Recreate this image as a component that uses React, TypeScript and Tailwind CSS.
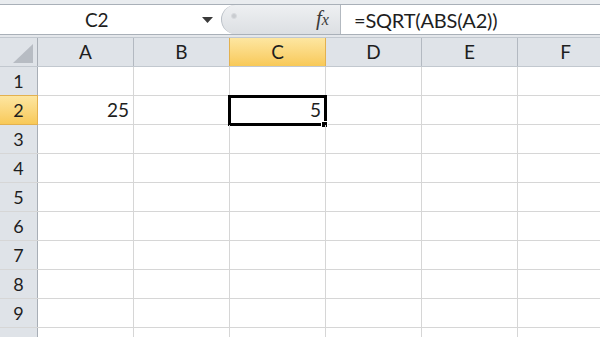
import React from "react";

const cols = ["A", "B", "C", "D", "E", "F"];
const rows = [1, 2, 3, 4, 5, 6, 7, 8, 9, 10];

export default function App() {
  return (
    <div
      className="w-[600px] h-[337px] overflow-hidden bg-white text-[#1e1e1e]"
      style={{ fontFamily: "Lato, 'Open Sans', sans-serif" }}
    >
      <div className="h-[4px] bg-[#e9ecef]" />
      {/* formula bar */}
      <div className="h-[31px] flex border-y border-[#a9b0b8] bg-white">
        <div className="w-[221px] shrink-0 relative">
          <span className="absolute left-[85px] top-[3px] text-[19px] leading-[24px] tracking-[-0.3px]">C2</span>
          <svg className="absolute left-[202px] top-[12px]" width="11" height="6" viewBox="0 0 11 6">
            <path d="M0 0 H11 L5.5 6 Z" fill="#3a3a3a" />
          </svg>
        </div>
        <div className="w-[120px] shrink-0 relative rounded-l-[15px] border-l border-[#b9bfc6] border-r border-r-[#b3b9c0] bg-gradient-to-b from-[#eef0f2] to-[#dcdfe3]">
          <div className="absolute left-[9px] top-[8px] w-[6px] h-[6px] rounded-full bg-[#c9ccd0] border border-[#d8dade]" />
          <span
            className="absolute left-[94px] top-[1px] text-[21px] italic leading-[24px] text-[#3a3a3a]"
            style={{ fontFamily: "'Liberation Serif', serif" }}
          >
            f<span className="text-[16px]">x</span>
          </span>
        </div>
        <div className="flex-1 min-w-0 pl-[13px] flex items-center">
          <span className="text-[20px] leading-[24px] tracking-[-0.2px] whitespace-nowrap">=SQRT(ABS(A2))</span>
        </div>
      </div>
      <div className="h-[2px] bg-[#e4e7eb]" />
      {/* grid */}
      <div className="flex flex-col">
        <div className="flex h-[30px] border-y border-[#c2c8cf]">
          <div className="w-[38px] shrink-0 bg-[#dfe3e8] border-r border-[#a8aeb6] relative">
            <svg className="absolute left-[13px] top-[6px]" width="20" height="19" viewBox="0 0 20 19">
              <path d="M20 0 V19 H0 Z" fill="#b7bcc3" />
            </svg>
          </div>
          {cols.map((c) => (
            <div
              key={c}
              className={
                c === "C"
                  ? "w-[97px] -ml-[1px] shrink-0 flex items-center justify-center text-[19px] bg-gradient-to-b from-[#fde6a0] to-[#f8c957] border-x border-[#e3b14f]"
                  : "w-[96px] shrink-0 flex items-center justify-center text-[19px] bg-[#dfe3e8] border-r border-[#b3b9c1]"
              }
            >
              {c}
            </div>
          ))}
        </div>
        {rows.map((r) => (
          <div key={r} className="flex h-[29px] border-b border-[#d6d6d6]">
            <div
              className={
                r === 2
                  ? "w-[38px] shrink-0 flex items-center justify-center text-[18px] bg-gradient-to-b from-[#fde6a0] to-[#f8c957] border-r border-y border-[#e3b14f] -mt-[1px] h-[30px]"
                  : "w-[38px] shrink-0 flex items-center justify-center text-[18px] bg-[#dfe3e8] border-r border-[#a8aeb6]"
              }
            >
              {r < 10 ? r : null}
            </div>
            {cols.map((c) => (
              <div
                key={c}
                className="w-[96px] shrink-0 border-r border-[#d6d6d6] relative flex items-center justify-end pr-[4px] text-[19px]"
              >
                {r === 2 && c === "A" ? "25" : null}
                {r === 2 && c === "C" ? (
                  <>
                    <span>5</span>
                    <div className="absolute left-[-2px] top-[-1px] w-[99px] h-[31px] border-[3px] border-black" />
                    <div className="absolute left-[91px] top-[25px] w-[7px] h-[7px] bg-black border border-white" />
                  </>
                ) : null}
              </div>
            ))}
          </div>
        ))}
      </div>
    </div>
  );
}
